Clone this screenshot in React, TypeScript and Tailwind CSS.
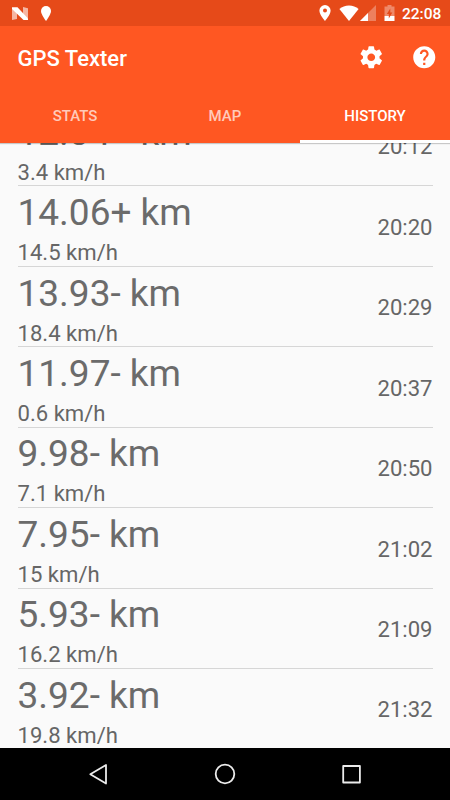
import React, { useState } from 'react'

interface Entry {
  distance: string;
  speed: string;
  time: string;
}

const entries: Entry[] = [
  { distance: '12.04+ km', speed: '3.4 km/h', time: '20:12' },
  { distance: '14.06+ km', speed: '14.5 km/h', time: '20:20' },
  { distance: '13.93- km', speed: '18.4 km/h', time: '20:29' },
  { distance: '11.97- km', speed: '0.6 km/h', time: '20:37' },
  { distance: '9.98- km', speed: '7.1 km/h', time: '20:50' },
  { distance: '7.95- km', speed: '15 km/h', time: '21:02' },
  { distance: '5.93- km', speed: '16.2 km/h', time: '21:09' },
  { distance: '3.92- km', speed: '19.8 km/h', time: '21:32' },
]

const tabs = ['STATS', 'MAP', 'HISTORY']

function StatusBar() {
  return (
    <div className="flex h-[26px] shrink-0 items-center bg-[#e64a19] pl-3 pr-2 text-white">
      <svg className="h-[13px] w-4" viewBox="0 0 16 13">
        <path d="M0 1.5 5 5v7L0 13zM11 0l5 1.3v11L11 8z" fill="#fff" opacity=".6" />
        <path d="M0 .3h5.500L16 11.500V13h-4.500L0 2z" fill="#fff" />
      </svg>
      <svg className="ml-3 h-[15px] w-3" viewBox="0 0 12 15">
        <path d="M6 0a5 5 0 0 0-5 5c0 3.600 5 10 5 10s5-6.400 5-10a5 5 0 0 0-5-5z" fill="#fff" />
      </svg>
      <div className="flex-1" />
      <svg className="h-4 w-3" viewBox="0 0 12 16">
        <path
          d="M6 0a5.600 5.600 0 0 0-5.600 5.600C.4 9.800 6 16 6 16s5.600-6.200 5.600-10.400A5.600 5.600 0 0 0 6 0zm0 7.600a2 2 0 1 1 0-4 2 2 0 0 1 0 4z"
          fill="#fff"
        />
      </svg>
      <svg className="ml-2 h-4 w-5" viewBox="0 0 20 16">
        <path d="M10 16 .4 4C3 1.800 6.300.5 10 .5S17 1.800 19.600 4z" fill="#fff" />
      </svg>
      <svg className="ml-[1px] h-4 w-4" viewBox="0 0 16 16">
        <path d="M16 0v16H0z" fill="#fff" opacity=".3" />
        <path d="M8 8v8H0z" fill="#fff" />
      </svg>
      <svg className="ml-2 h-4 w-[11px]" viewBox="0 0 11 16">
        <path d="M3.500 0h4v1.600H10.500V11H.5V1.600h3z" fill="#fff" opacity=".35" />
        <path d="M.5 11h10v5H.5z" fill="#fff" />
        <path d="M6.300 3.500v4h2L4.800 13.500v-4.500h-2z" fill="#e64a19" />
      </svg>
      <span className="ml-[7px] w-[40px] pt-[3px] text-[15.500px] leading-none font-medium">22:08</span>
    </div>
  )
}

function Toolbar() {
  return (
    <div className="flex h-[63px] shrink-0 items-center pl-[17.500px] pr-[13px] text-white">
      <h1 className="flex-1 pt-0.5 text-[22px] leading-none font-medium">GPS Texter</h1>
      <svg className="mr-[26.500px] h-[26.500px] w-[26.500px]" viewBox="0 0 24 24" fill="currentColor">
        <path d="M19.430 12.980c.04-.32.07-.64.07-.98s-.03-.66-.07-.98l2.110-1.650c.19-.15.24-.42.12-.64l-2-3.460c-.12-.22-.39-.3-.61-.22l-2.490 1c-.52-.4-1.080-.73-1.690-.98l-.38-2.650C14.460 2.180 14.250 2 14 2h-4c-.25 0-.46.18-.49.42l-.38 2.650c-.61.25-1.170.59-1.690.98l-2.490-1c-.23-.09-.49 0-.61.22l-2 3.460c-.13.22-.07.49.12.64l2.110 1.650c-.04.32-.07.65-.07.98s.03.66.07.98l-2.110 1.650c-.19.15-.24.42-.12.64l2 3.460c.12.22.39.3.61.22l2.490-1c.52.4 1.080.73 1.690.98l.38 2.650c.03.24.24.42.49.42h4c.25 0 .46-.18.49-.42l.38-2.650c.61-.25 1.170-.59 1.690-.98l2.490 1c.23.09.49 0 .61-.22l2-3.460c.12-.22.07-.49-.12-.64l-2.110-1.650zM12 15.500c-1.930 0-3.500-1.570-3.500-3.500s1.570-3.500 3.500-3.500 3.500 1.570 3.500 3.500-1.570 3.500-3.500 3.500z" />
      </svg>
      <svg className="h-[26.500px] w-[26.500px]" viewBox="0 0 24 24" fill="currentColor">
        <path d="M12 2C6.480 2 2 6.480 2 12s4.480 10 10 10 10-4.480 10-10S17.520 2 12 2zm1 17h-2v-2h2v2zm2.070-7.750l-.9.920C13.450 12.900 13 13.500 13 15h-2v-.5c0-1.100.45-2.100 1.170-2.830l1.240-1.260c.37-.36.59-.86.59-1.410 0-1.100-.9-2-2-2s-2 .9-2 2H8c0-2.210 1.790-4 4-4s4 1.790 4 4c0 .88-.36 1.680-.93 2.250z" />
      </svg>
    </div>
  )
}

function NavBar() {
  return (
    <div className="flex h-[52px] shrink-0 items-center justify-between bg-black pl-[87px] pr-[87px]">
      <svg className="h-6 w-6" viewBox="0 0 24 24" fill="none" stroke="#ebebeb" strokeWidth="1.800" strokeLinejoin="round">
        <path d="M19 3v18.500L3.300 12.200z" />
      </svg>
      <svg className="h-6 w-6" viewBox="0 0 24 24" fill="none" stroke="#ebebeb" strokeWidth="1.800">
        <circle cx="12" cy="12" r="9.300" />
      </svg>
      <svg className="h-6 w-6" viewBox="0 0 24 24" fill="none" stroke="#ebebeb" strokeWidth="1.800" strokeLinejoin="round">
        <path d="M4.200 4h16.700v16.500H4.200z" />
      </svg>
    </div>
  )
}

export default function App() {
  const [active, setActive] = useState('HISTORY')

  return (
    <div className="flex h-[800px] w-[450px] flex-col overflow-hidden bg-[#fafafa] font-['Roboto',sans-serif]">
      <StatusBar />
      <header className="z-10 shrink-0 bg-[#ff5722] shadow-[0_1px_1px_rgba(0,0,0,0.2)]">
        <Toolbar />
        <div className="flex h-[54px]">
          {tabs.map((tab) => (
            <button
              key={tab}
              onClick={() => setActive(tab)}
              className={
                tab === active
                  ? 'flex-1 border-b-[3px] border-white pt-[3px] text-[15px] font-medium text-white'
                  : 'flex-1 border-b-[3px] border-transparent pt-[3px] text-[15px] font-medium text-white/70'
              }
            >
              {tab}
            </button>
          ))}
        </div>
      </header>
      <main className="min-h-0 flex-1 overflow-hidden px-[17.500px]">
        {/* list is scrolled so the first row sits half under the tabs */}
        <ul className="-mt-[37px]">
          {entries.map((entry) => (
            <li key={entry.time} className="flex h-[80.430px] items-center justify-between border-b border-[#d6d6d6] text-[#666]">
              <div className="pt-[4px]">
                <p className="text-[37px] leading-[44px] text-[#6b6b6b]">{entry.distance}</p>
                <p className="mt-[4px] text-[22.100px] leading-[26px]">{entry.speed}</p>
              </div>
              <span className="pt-[1.500px] text-[22.100px] leading-[26px]">{entry.time}</span>
            </li>
          ))}
        </ul>
      </main>
      <NavBar />
    </div>
  )
}
